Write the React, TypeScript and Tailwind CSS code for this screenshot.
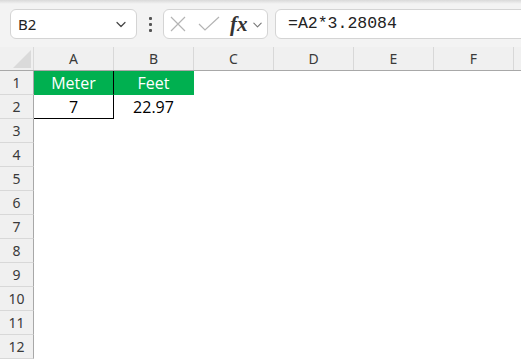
import React from 'react';

const COLS = ['A', 'B', 'C', 'D', 'E', 'F', 'G'];
const ROWS = Array.from({ length: 12 }, (_, i) => i + 1);

const uiFont = { fontFamily: '"Noto Sans", "Open Sans", sans-serif' };
const cellFont = { fontFamily: '"Open Sans", "Noto Sans", sans-serif' };

const Chevron: React.FC<{ size?: number; className?: string }> = ({ size = 12, className }) => (
  <svg width={size} height={size} viewBox="0 0 12 12" className={className}>
    <path d="M2 4.5 L6 8.5 L10 4.5" fill="none" stroke="currentColor" strokeWidth="1.2" strokeLinecap="round" strokeLinejoin="round" />
  </svg>
);

function cellContent(col: string, row: number) {
  if (row === 1 && col === 'A') return { text: 'Meter', green: true };
  if (row === 1 && col === 'B') return { text: 'Feet', green: true };
  if (row === 2 && col === 'A') return { text: '7', green: false };
  if (row === 2 && col === 'B') return { text: '22.97', green: false };
  return { text: '', green: false };
}

export default function App() {
  return (
    <div className="w-[521px] h-[359px] overflow-hidden bg-white relative" style={uiFont}>
      {/* Toolbar */}
      <div className="h-[47px] bg-[#f3f3f3] relative flex items-start pt-[9px] pl-[10px]">
        <div className="absolute left-0 right-0 top-0 h-[4px] bg-gradient-to-b from-[#d9d9d9] to-[#f3f3f3]" />
        {/* Name box */}
        <div className="shrink-0 w-[127px] h-[30px] bg-white border border-[#d4d4d4] rounded-[6px] flex items-center justify-between pl-[7px] pr-[9px] relative">
          <span className="text-[15px] text-[#222]">B2</span>
          <Chevron size={12} className="text-[#444]" />
        </div>
        {/* Dots */}
        <div className="shrink-0 w-[26px] h-[30px] flex flex-col items-center justify-center gap-[3px]">
          <span className="w-[3px] h-[3px] bg-[#555] rounded-[1px]" />
          <span className="w-[3px] h-[3px] bg-[#555] rounded-[1px]" />
          <span className="w-[3px] h-[3px] bg-[#555] rounded-[1px]" />
        </div>
        {/* Cancel / enter / fx */}
        <div className="shrink-0 w-[105px] h-[30px] bg-white border border-[#d4d4d4] rounded-[6px] flex items-center pl-[5px] relative">
          <svg width="18" height="18" viewBox="0 0 18 18" className="text-[#b4b4b4]">
            <path d="M2 2 L16 16 M16 2 L2 16" stroke="currentColor" strokeWidth="1.2" fill="none" />
          </svg>
          <svg width="22" height="16" viewBox="0 0 22 16" className="text-[#b4b4b4] ml-[11px]">
            <path d="M1 8 L7 14 L21 1" stroke="currentColor" strokeWidth="1.2" fill="none" />
          </svg>
          <span className="ml-[10px] text-[21px] italic font-bold text-[#333] leading-none" style={{ fontFamily: '"Liberation Serif", serif' }}>fx</span>
          <Chevron size={11} className="text-[#777] ml-[4px]" />
        </div>
        {/* Formula box */}
        <div className="shrink-0 ml-[7px] w-[260px] h-[30px] bg-white border border-[#d4d4d4] rounded-l-[6px] flex items-center pl-[12px]">
          <span className="text-[16.5px] text-[#222]" style={{ fontFamily: '"Liberation Mono", monospace' }}>=A2*3.28084</span>
        </div>
      </div>

      {/* Column header */}
      <div className="flex h-[24px] bg-[#f0f0f0] border-b border-[#a8a8a8]">
        <div className="w-[34px] h-[23px] border-r border-[#dadada] relative shrink-0">
          <svg width="18" height="18" viewBox="0 0 18 18" className="absolute right-[2px] bottom-[2px]">
            <path d="M18 0 L18 18 L0 18 Z" fill="#dadada" />
          </svg>
        </div>
        {COLS.map(c => (
          <div key={c} className="w-[80px] shrink-0 h-[23px] border-r border-[#d8d8d8] flex items-center justify-center text-[14px] text-[#3a3a3a]">
            {c === 'G' ? '' : c}
          </div>
        ))}
      </div>

      {/* Rows */}
      {ROWS.map(r => (
        <div key={r} className="flex h-[24px]">
          <div className="w-[34px] shrink-0 h-[24px] bg-[#f0f0f0] border-r border-[#a8a8a8] border-b border-b-[#d8d8d8] flex items-center justify-center text-[14px] text-[#3a3a3a]">
            {r}
          </div>
          {COLS.map(c => {
            const cell = cellContent(c, r);
            const blackRight = c === 'A' && (r === 1 || r === 2);
            const blackBottom = c === 'A' && r === 2;
            return (
              <div
                key={c}
                className={`w-[80px] shrink-0 h-[24px] flex items-center justify-center text-[16px] border-r border-b ${cell.green ? 'bg-[#00b050] text-white' : 'text-black'} ${blackRight ? 'border-r-black' : cell.green ? 'border-r-[#00b050]' : 'border-r-transparent'} ${blackBottom ? 'border-b-black' : 'border-b-transparent'}`}
                style={cellFont}
              >
                {cell.text}
              </div>
            );
          })}
        </div>
      ))}
    </div>
  );
}
